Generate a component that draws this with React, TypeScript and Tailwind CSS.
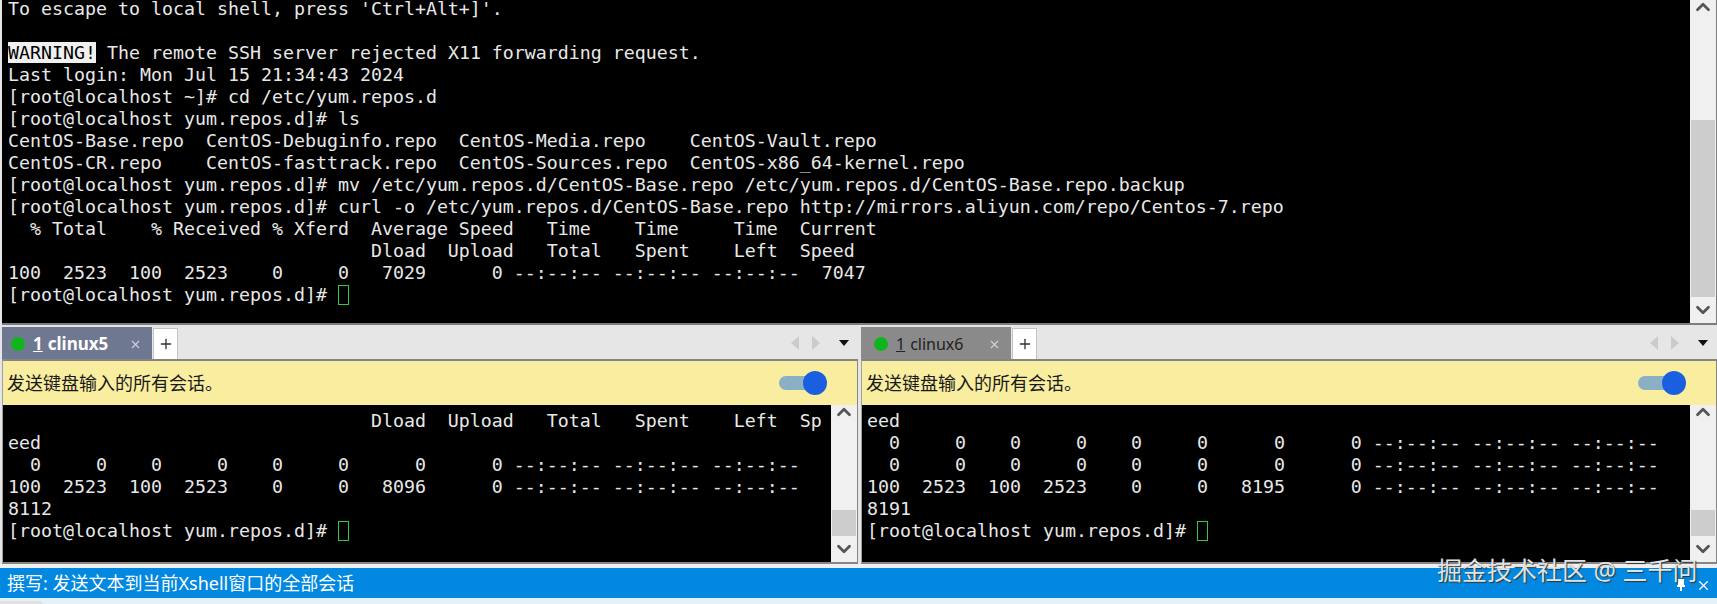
import { ChevronDown, ChevronUp, Plus, X } from 'lucide-react'

const prompt = '[root@localhost yum.repos.d]# '

const topLines = [
  '',
  'Last login: Mon Jul 15 21:34:43 2024',
  '[root@localhost ~]# cd /etc/yum.repos.d',
  '[root@localhost yum.repos.d]# ls',
  'CentOS-Base.repo  CentOS-Debuginfo.repo  CentOS-Media.repo    CentOS-Vault.repo',
  'CentOS-CR.repo    CentOS-fasttrack.repo  CentOS-Sources.repo  CentOS-x86_64-kernel.repo',
  '[root@localhost yum.repos.d]# mv /etc/yum.repos.d/CentOS-Base.repo /etc/yum.repos.d/CentOS-Base.repo.backup',
  '[root@localhost yum.repos.d]# curl -o /etc/yum.repos.d/CentOS-Base.repo http://mirrors.aliyun.com/repo/Centos-7.repo',
  '  % Total    % Received % Xferd  Average Speed   Time    Time     Time  Current',
  '                                 Dload  Upload   Total   Spent    Left  Speed',
  '100  2523  100  2523    0     0   7029      0 --:--:-- --:--:-- --:--:--  7047',
]

const leftLines = [
  '                                 Dload  Upload   Total   Spent    Left  Sp',
  'eed',
  '  0     0    0     0    0     0      0      0 --:--:-- --:--:-- --:--:--',
  '100  2523  100  2523    0     0   8096      0 --:--:-- --:--:-- --:--:--',
  '8112',
]

const rightLines = [
  'eed',
  '  0     0    0     0    0     0      0      0 --:--:-- --:--:-- --:--:--',
  '  0     0    0     0    0     0      0      0 --:--:-- --:--:-- --:--:--',
  '100  2523  100  2523    0     0   8195      0 --:--:-- --:--:-- --:--:--',
  '8191',
]

function Line({ text }: { text: string }) {
  return <div className="h-[22px] leading-[22px] whitespace-pre">{text}</div>
}

function PromptLine() {
  return (
    <div className="h-[22px] leading-[22px] whitespace-pre flex items-center">
      <span>{prompt}</span>
      <span className="w-[11px] h-[20px] border border-[#2fc84a]"></span>
    </div>
  )
}

function Scrollbar({ thumb }: { thumb: string }) {
  return (
    <div className="w-[26px] shrink-0 bg-[#f0f0f0] flex flex-col items-center text-[#555555]">
      <div className="h-[14px] flex items-center">
        <ChevronUp size={22} strokeWidth={3} />
      </div>
      <div className={`mt-auto w-[24px] bg-[#cdcdcd] ${thumb}`}></div>
      <div className="h-[26px] flex items-center">
        <ChevronDown size={22} strokeWidth={3} />
      </div>
    </div>
  )
}

function Pane({ name, active, lines }: { name: string; active: boolean; lines: string[] }) {
  return (
    <div className="w-[856px] shrink-0 flex flex-col">
      {/* tabs */}
      <div className="h-[34px] pt-[2px] flex items-stretch bg-[#e6e6e6]">
        <div className={`w-[150px] flex items-center pt-[2px] ${active ? 'pl-[9px] bg-[#6e7891] text-white font-bold text-[17px]' : 'pl-[13px] bg-[#8a8a8a] text-[#222222] text-[16px]'}`}>
          <span className="w-[14px] h-[14px] rounded-full bg-[#10b41c]"></span>
          <span className="ml-[8px] underline">1</span>
          <span className="ml-[5px]">{name}</span>
          <X size={13} className="ml-auto mr-[10px] text-[#cfd3dc]" />
        </div>
        <div className="ml-px w-[25px] mt-px bg-white border border-[#c4c4c4] border-b-0 flex items-center justify-center text-[#333333]">
          <Plus size={16} />
        </div>
        <div className="ml-auto pr-[9px] flex items-center">
          <svg width="8" height="14" viewBox="0 0 8 14"><polygon points="8,0 0,7 8,14" fill="#cbcbcb" /></svg>
          <svg width="8" height="14" viewBox="0 0 8 14" className="ml-[13px]"><polygon points="0,0 8,7 0,14" fill="#cbcbcb" /></svg>
          <svg width="10" height="6" viewBox="0 0 10 6" className="ml-[19px]"><polygon points="0,0 10,0 5,6" fill="#111111" /></svg>
        </div>
      </div>
      <div className="flex-1 flex flex-col border-x border-y-2 border-[#858585] border-l-[#a0a0a0]">
        {/* broadcast bar */}
        <div className="h-[44px] bg-[#f9eea0] flex items-center justify-between pl-[4px] pr-[30px] text-[18px] text-[#1a1a1a]">
          <span>发送键盘输入的所有会话。</span>
          <div className="flex items-center">
            <span className="w-[30px] h-[14px] rounded-l-full bg-[#8bafc5]"></span>
            <span className="-ml-[6px] w-[24px] h-[24px] rounded-full bg-[#1a5fe0]"></span>
          </div>
        </div>
        <div className="h-[157px] flex bg-black">
          <div className="flex-1 pl-[5px] pt-[5px] overflow-hidden font-['DejaVu_Sans_Mono',monospace] text-[18.27px] text-[#e8e8e8]">
            {lines.map((line, i) => (
              <Line key={i} text={line} />
            ))}
            <PromptLine />
          </div>
          <Scrollbar thumb="h-[26px]" />
        </div>
      </div>
    </div>
  )
}

export default function App() {
  return (
    <div className="relative h-[604px] w-full overflow-hidden flex flex-col bg-[#e6e6e6] font-['Noto_Sans','Noto_Sans_CJK_SC',sans-serif]">
      {/* top terminal */}
      <div className="h-[325px] shrink-0 pl-[2px] bg-[#e6e6e6]">
        <div className="h-full flex border-b-2 border-r border-[#7c7c7c] bg-black">
          <div className="flex-1 pl-[6px] overflow-hidden font-['DejaVu_Sans_Mono',monospace] text-[18.27px] text-[#e8e8e8]">
            <div className="h-[20px] leading-[18px] whitespace-pre">To escape to local shell, press 'Ctrl+Alt+]'.</div>
            <Line text="" />
            <div className="h-[22px] leading-[22px] whitespace-pre">
              <span className="bg-[#f0f0f0] text-black">WARNING!</span> The remote SSH server rejected X11 forwarding request.
            </div>
            {topLines.slice(1).map((line, i) => (
              <Line key={i} text={line} />
            ))}
            <PromptLine />
          </div>
          <Scrollbar thumb="h-[177px]" />
        </div>
      </div>

      {/* split panes */}
      <div className="h-[239px] shrink-0 pl-[2px] flex gap-[3px]">
        <Pane name="clinux5" active lines={leftLines} />
        <Pane name="clinux6" active={false} lines={rightLines} />
      </div>

      {/* compose bar */}
      <div className="h-[4px] bg-[#f0f0f0]"></div>
      <div className="h-[30px] shrink-0 pl-[7px] pr-[6px] flex items-center justify-between bg-[#0288e0] text-white">
        <span className="text-[18px]">撰写: 发送文本到当前Xshell窗口的全部会话</span>
        <div className="flex items-center mt-[4px]">
          <svg width="12" height="14" viewBox="0 0 12 14" fill="none" stroke="white" strokeWidth="2">
            <path d="M6 1v12M2 8h8M4 1v7M8 1v7" />
          </svg>
          <X size={15} className="ml-[9px]" />
        </div>
      </div>
      <div className="flex-1 bg-[#e3f1f8] flex items-end">
        <div className="w-[42px] h-[3px] bg-[#e0e0e0]"></div>
      </div>

      {/* watermark */}
      <span className="absolute left-[1437px] top-[554px] text-[25px] leading-[32px] whitespace-pre text-[#dfe3e6] [text-shadow:1px_1px_1px_#333333]">掘金技术社区 @ 三千问</span>
    </div>
  )
}
